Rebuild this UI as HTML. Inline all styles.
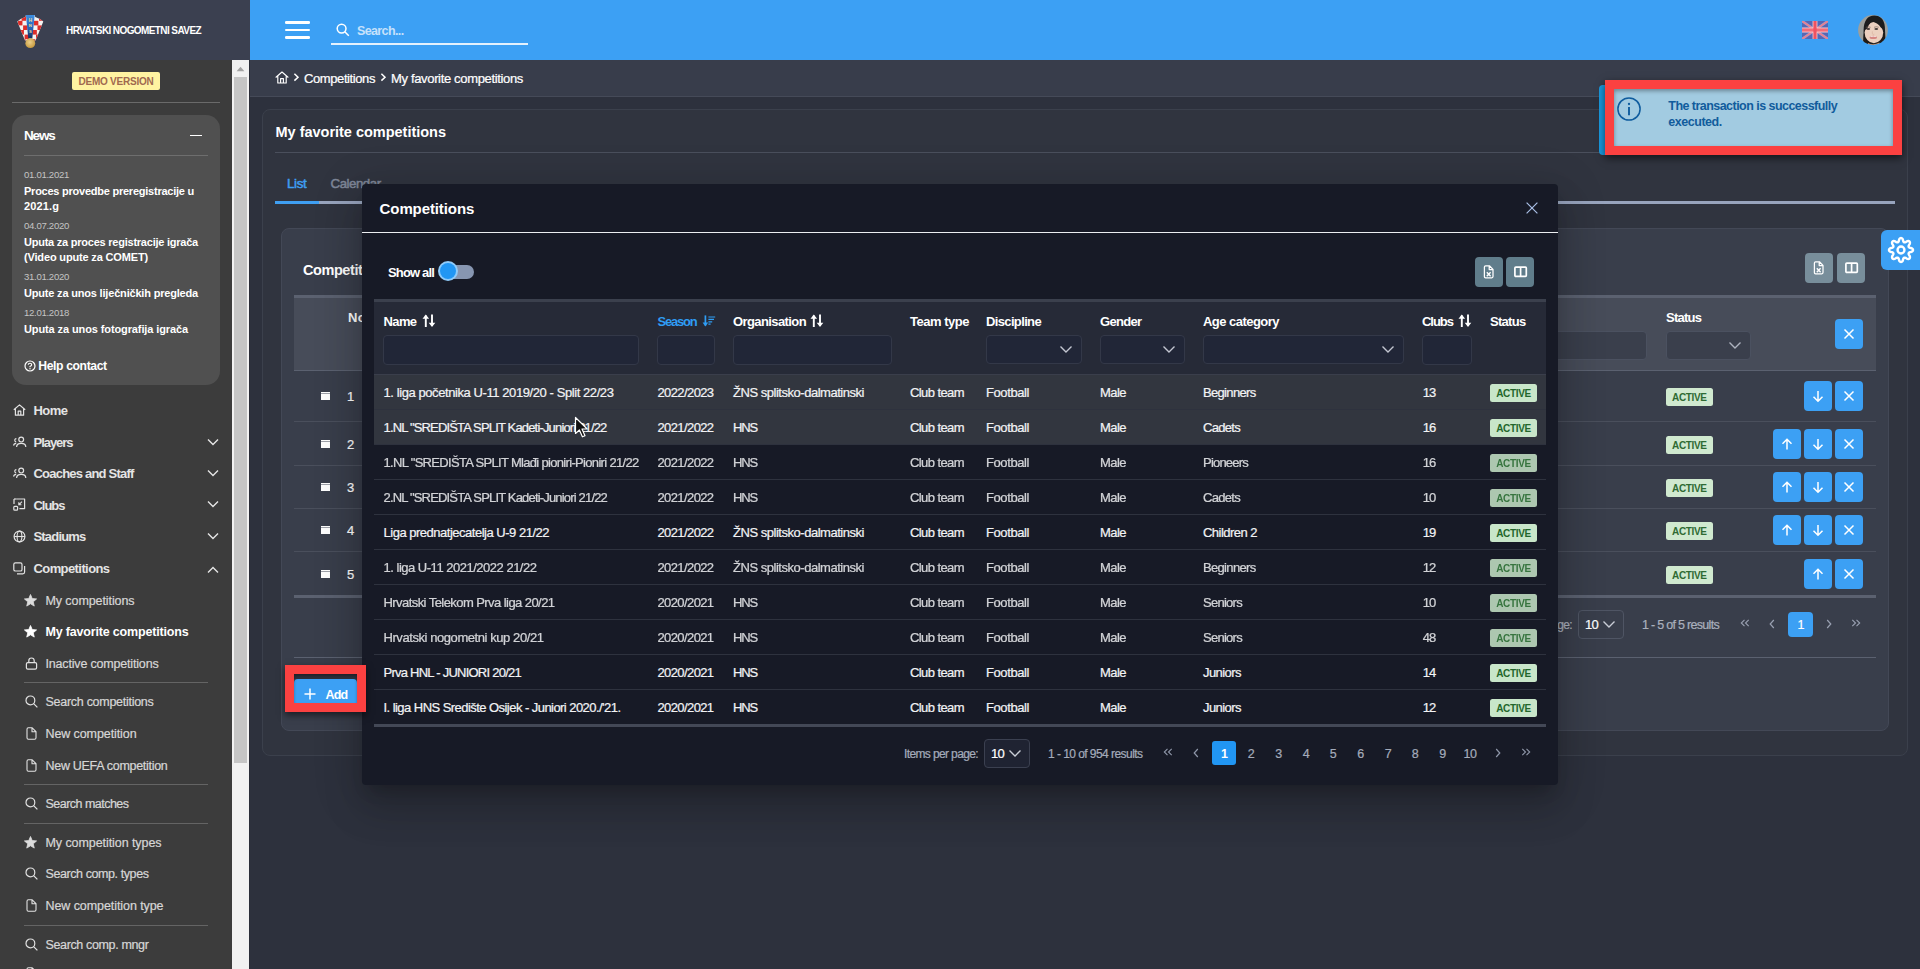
<!DOCTYPE html>
<html lang="en"><head><meta charset="utf-8"><title>My favorite competitions</title>
<style>
*{box-sizing:border-box}
html,body{margin:0;padding:0}
body{width:1920px;height:969px;overflow:hidden;position:relative;background:#2c303c;font-family:"Liberation Sans",sans-serif}
.b{position:absolute;display:block}
.t{position:absolute;white-space:pre;line-height:20px;height:20px}
</style></head>
<body>
<div class="b" style="left:250px;top:60px;width:1670px;height:909px;background:#2d313d;"></div>
<div class="b" style="left:250px;top:60px;width:1670px;height:37px;background:#383d4b;border-bottom:1px solid #454a58"></div>
<div class="b" style="left:262px;top:109px;width:1646px;height:647px;background:#30343f;border:1px solid #3b404c;border-radius:8px"></div>
<div class="b" style="left:281px;top:228px;width:1608px;height:503px;background:#393e4b;border:1px solid #434856;border-radius:8px"></div>
<svg class="b" style="left:275px;top:71px;" width="14" height="13" viewBox="0 0 14 13"><path d="M1 6.2 L7 1 L13 6.2 M2.8 5.2 V12 H11.2 V5.2 M5.6 12 V7.6 H8.4 V12" fill="none" stroke="#fff" stroke-width="1.15" stroke-linejoin="round" stroke-linecap="round"/></svg>
<svg class="b" style="left:293px;top:72px;" width="7" height="10" viewBox="0 0 7 10"><path d="M1.4 1.8 L5 5.2 L1.4 8.6" fill="none" stroke="#fff" stroke-width="1.5"/></svg>
<span class="t" style="-webkit-text-stroke:0.22px;left:304.00px;top:69.00px;font-size:13px;font-weight:400;color:#fff;letter-spacing:-0.406px;">Competitions</span>
<svg class="b" style="left:380.4px;top:72px;" width="7" height="10" viewBox="0 0 7 10"><path d="M1.4 1.8 L5 5.2 L1.4 8.6" fill="none" stroke="#fff" stroke-width="1.5"/></svg>
<span class="t" style="-webkit-text-stroke:0.22px;left:391.00px;top:69.00px;font-size:13px;font-weight:400;color:#fff;letter-spacing:-0.340px;">My favorite competitions</span>
<span class="t" style="left:275.50px;top:121.80px;font-size:14.5px;font-weight:700;color:#fff;letter-spacing:-0.013px;">My favorite competitions</span>
<div class="b" style="left:275px;top:152px;width:1620px;height:1px;background:#4a4f5c;"></div>
<span class="t" style="-webkit-text-stroke:0.22px;left:287.00px;top:174.00px;font-size:13.3px;font-weight:400;color:#3f9ff2;letter-spacing:-0.351px;-webkit-text-stroke:0.5px;">List</span>
<span class="t" style="-webkit-text-stroke:0.22px;left:330.60px;top:174.00px;font-size:13.3px;font-weight:400;color:#7e8698;letter-spacing:-0.496px;-webkit-text-stroke:0.5px;">Calendar</span>
<div class="b" style="left:275px;top:201px;width:1620px;height:3px;background:#98a4bd;"></div>
<div class="b" style="left:275px;top:201px;width:44px;height:3px;background:#3f9ff2;"></div>
<span class="t" style="left:303.00px;top:259.60px;font-size:14.5px;font-weight:700;color:#fff;letter-spacing:-0.428px;">Competitions</span>
<div class="b" style="left:1805px;top:253px;width:28px;height:30px;background:#788e9b;border-radius:4px"></div>
<svg class="b" style="left:1813.4px;top:261.4px;" width="12" height="14" viewBox="0 0 12 14"><path d="M2.6 0.8 H6.4 L10 4.4 V11.6 Q10 12.8 8.8 12.8 H2.6 Q1.4 12.8 1.4 11.6 V2 Q1.4 0.8 2.6 0.8 Z M6.2 0.8 V4.6 H10" fill="none" stroke="#fff" stroke-width="1.25" stroke-linejoin="round"/><path d="M3.8 7.2 L7.6 11.2 M7.6 7.2 L3.8 11.2" stroke="#fff" stroke-width="1.4"/></svg>
<div class="b" style="left:1837px;top:253px;width:28px;height:30px;background:#788e9b;border-radius:4px"></div>
<svg class="b" style="left:1845.4px;top:261.6px;" width="14" height="12" viewBox="0 0 14 12"><rect x="0.9" y="1.2" width="11.4" height="9.2" rx="0.9" fill="none" stroke="#fff" stroke-width="1.7"/><path d="M6.6 1.2 V10.4" stroke="#fff" stroke-width="1.7"/></svg>
<div class="b" style="left:294px;top:295px;width:1582px;height:3px;background:#5b6170;"></div>
<div class="b" style="left:294px;top:298px;width:1582px;height:72px;background:#474c59;"></div>
<div class="b" style="left:294px;top:370px;width:1582px;height:1px;background:#5b6170;"></div>
<span class="t" style="left:348.00px;top:308.00px;font-size:13px;font-weight:700;color:#fff;letter-spacing:0.328px;">No</span>
<span class="t" style="left:1666.00px;top:308.00px;font-size:13px;font-weight:700;color:#fff;letter-spacing:-0.739px;">Status</span>
<div class="b" style="left:1400px;top:331px;width:247px;height:29px;background:#3a3f4c;border:1px solid #4b5160;border-radius:4px"></div>
<div class="b" style="left:1666px;top:331px;width:85px;height:29px;background:#3a3f4c;border:1px solid #4b5160;border-radius:4px"></div>
<svg class="b" style="left:1728px;top:341px;" width="14" height="9" viewBox="0 0 14 9"><path d="M1.5 1.5 L7 7 L12.5 1.5" fill="none" stroke="#aeb3bf" stroke-width="1.4"/></svg>
<div class="b" style="left:1835px;top:319px;width:28px;height:30px;background:#3ca0f4;border-radius:4px"></div>
<svg class="b" style="left:1843px;top:328px;overflow:visible" width="12" height="12" viewBox="0 0 12 12"><path d="M1.5 1.5 L10.5 10.5 M10.5 1.5 L1.5 10.5" stroke="#fff" stroke-width="1.5" fill="none"/></svg>
<div class="b" style="left:320.6px;top:391.7px;width:9.5px;height:8.4px;background:#9da0a8;"></div>
<div class="b" style="left:320.6px;top:391.7px;width:9.5px;height:1.6px;background:#fdfdfd;"></div>
<div class="b" style="left:320.6px;top:393.95px;width:9.5px;height:1.6px;background:#fdfdfd;"></div>
<div class="b" style="left:320.6px;top:396.2px;width:9.5px;height:1.6px;background:#fdfdfd;"></div>
<div class="b" style="left:320.6px;top:398.45px;width:9.5px;height:1.6px;background:#fdfdfd;"></div>
<span class="t" style="-webkit-text-stroke:0.22px;left:347.00px;top:387.00px;font-size:13px;font-weight:400;color:#fff;letter-spacing:-0.234px;">1</span>
<div class="b" style="left:1666px;top:388px;width:47px;height:18px;background:#d0e9cf;border-radius:2.5px"></div>
<span class="t" style="left:1672.10px;top:388.00px;font-size:10px;font-weight:700;color:#2f6b33;letter-spacing:-0.345px;">ACTIVE</span>
<div class="b" style="left:1835px;top:381px;width:28px;height:30px;background:#3ca0f4;border-radius:4px"></div>
<svg class="b" style="left:1843px;top:390px;overflow:visible" width="12" height="12" viewBox="0 0 12 12"><path d="M1.5 1.5 L10.5 10.5 M10.5 1.5 L1.5 10.5" stroke="#fff" stroke-width="1.5" fill="none"/></svg>
<div class="b" style="left:1804px;top:381px;width:28px;height:30px;background:#3ca0f4;border-radius:4px"></div>
<svg class="b" style="left:1812px;top:390px;overflow:visible" width="12" height="12" viewBox="0 0 12 12"><path d="M6 1 V11 M1.5 6.8 L6 11.3 L10.5 6.8" stroke="#fff" stroke-width="1.5" fill="none"/></svg>
<div class="b" style="left:320.6px;top:439.7px;width:9.5px;height:8.4px;background:#9da0a8;"></div>
<div class="b" style="left:320.6px;top:439.7px;width:9.5px;height:1.6px;background:#fdfdfd;"></div>
<div class="b" style="left:320.6px;top:441.95px;width:9.5px;height:1.6px;background:#fdfdfd;"></div>
<div class="b" style="left:320.6px;top:444.2px;width:9.5px;height:1.6px;background:#fdfdfd;"></div>
<div class="b" style="left:320.6px;top:446.45px;width:9.5px;height:1.6px;background:#fdfdfd;"></div>
<span class="t" style="-webkit-text-stroke:0.22px;left:347.00px;top:435.00px;font-size:13px;font-weight:400;color:#fff;letter-spacing:-0.234px;">2</span>
<div class="b" style="left:1666px;top:436px;width:47px;height:18px;background:#d0e9cf;border-radius:2.5px"></div>
<span class="t" style="left:1672.10px;top:436.00px;font-size:10px;font-weight:700;color:#2f6b33;letter-spacing:-0.345px;">ACTIVE</span>
<div class="b" style="left:1835px;top:429px;width:28px;height:30px;background:#3ca0f4;border-radius:4px"></div>
<svg class="b" style="left:1843px;top:438px;overflow:visible" width="12" height="12" viewBox="0 0 12 12"><path d="M1.5 1.5 L10.5 10.5 M10.5 1.5 L1.5 10.5" stroke="#fff" stroke-width="1.5" fill="none"/></svg>
<div class="b" style="left:1804px;top:429px;width:28px;height:30px;background:#3ca0f4;border-radius:4px"></div>
<svg class="b" style="left:1812px;top:438px;overflow:visible" width="12" height="12" viewBox="0 0 12 12"><path d="M6 1 V11 M1.5 6.8 L6 11.3 L10.5 6.8" stroke="#fff" stroke-width="1.5" fill="none"/></svg>
<div class="b" style="left:1773px;top:429px;width:28px;height:30px;background:#3ca0f4;border-radius:4px"></div>
<svg class="b" style="left:1781px;top:438px;overflow:visible" width="12" height="12" viewBox="0 0 12 12"><path d="M6 11.5 V1.5 M1.5 5.7 L6 1.2 L10.5 5.7" stroke="#fff" stroke-width="1.5" fill="none"/></svg>
<div class="b" style="left:320.6px;top:482.7px;width:9.5px;height:8.4px;background:#9da0a8;"></div>
<div class="b" style="left:320.6px;top:482.7px;width:9.5px;height:1.6px;background:#fdfdfd;"></div>
<div class="b" style="left:320.6px;top:484.95px;width:9.5px;height:1.6px;background:#fdfdfd;"></div>
<div class="b" style="left:320.6px;top:487.2px;width:9.5px;height:1.6px;background:#fdfdfd;"></div>
<div class="b" style="left:320.6px;top:489.45px;width:9.5px;height:1.6px;background:#fdfdfd;"></div>
<span class="t" style="-webkit-text-stroke:0.22px;left:347.00px;top:478.00px;font-size:13px;font-weight:400;color:#fff;letter-spacing:-0.234px;">3</span>
<div class="b" style="left:1666px;top:479px;width:47px;height:18px;background:#d0e9cf;border-radius:2.5px"></div>
<span class="t" style="left:1672.10px;top:479.00px;font-size:10px;font-weight:700;color:#2f6b33;letter-spacing:-0.345px;">ACTIVE</span>
<div class="b" style="left:1835px;top:472px;width:28px;height:30px;background:#3ca0f4;border-radius:4px"></div>
<svg class="b" style="left:1843px;top:481px;overflow:visible" width="12" height="12" viewBox="0 0 12 12"><path d="M1.5 1.5 L10.5 10.5 M10.5 1.5 L1.5 10.5" stroke="#fff" stroke-width="1.5" fill="none"/></svg>
<div class="b" style="left:1804px;top:472px;width:28px;height:30px;background:#3ca0f4;border-radius:4px"></div>
<svg class="b" style="left:1812px;top:481px;overflow:visible" width="12" height="12" viewBox="0 0 12 12"><path d="M6 1 V11 M1.5 6.8 L6 11.3 L10.5 6.8" stroke="#fff" stroke-width="1.5" fill="none"/></svg>
<div class="b" style="left:1773px;top:472px;width:28px;height:30px;background:#3ca0f4;border-radius:4px"></div>
<svg class="b" style="left:1781px;top:481px;overflow:visible" width="12" height="12" viewBox="0 0 12 12"><path d="M6 11.5 V1.5 M1.5 5.7 L6 1.2 L10.5 5.7" stroke="#fff" stroke-width="1.5" fill="none"/></svg>
<div class="b" style="left:320.6px;top:525.7px;width:9.5px;height:8.4px;background:#9da0a8;"></div>
<div class="b" style="left:320.6px;top:525.7px;width:9.5px;height:1.6px;background:#fdfdfd;"></div>
<div class="b" style="left:320.6px;top:527.95px;width:9.5px;height:1.6px;background:#fdfdfd;"></div>
<div class="b" style="left:320.6px;top:530.2px;width:9.5px;height:1.6px;background:#fdfdfd;"></div>
<div class="b" style="left:320.6px;top:532.45px;width:9.5px;height:1.6px;background:#fdfdfd;"></div>
<span class="t" style="-webkit-text-stroke:0.22px;left:347.00px;top:521.00px;font-size:13px;font-weight:400;color:#fff;letter-spacing:-0.234px;">4</span>
<div class="b" style="left:1666px;top:522px;width:47px;height:18px;background:#d0e9cf;border-radius:2.5px"></div>
<span class="t" style="left:1672.10px;top:522.00px;font-size:10px;font-weight:700;color:#2f6b33;letter-spacing:-0.345px;">ACTIVE</span>
<div class="b" style="left:1835px;top:515px;width:28px;height:30px;background:#3ca0f4;border-radius:4px"></div>
<svg class="b" style="left:1843px;top:524px;overflow:visible" width="12" height="12" viewBox="0 0 12 12"><path d="M1.5 1.5 L10.5 10.5 M10.5 1.5 L1.5 10.5" stroke="#fff" stroke-width="1.5" fill="none"/></svg>
<div class="b" style="left:1804px;top:515px;width:28px;height:30px;background:#3ca0f4;border-radius:4px"></div>
<svg class="b" style="left:1812px;top:524px;overflow:visible" width="12" height="12" viewBox="0 0 12 12"><path d="M6 1 V11 M1.5 6.8 L6 11.3 L10.5 6.8" stroke="#fff" stroke-width="1.5" fill="none"/></svg>
<div class="b" style="left:1773px;top:515px;width:28px;height:30px;background:#3ca0f4;border-radius:4px"></div>
<svg class="b" style="left:1781px;top:524px;overflow:visible" width="12" height="12" viewBox="0 0 12 12"><path d="M6 11.5 V1.5 M1.5 5.7 L6 1.2 L10.5 5.7" stroke="#fff" stroke-width="1.5" fill="none"/></svg>
<div class="b" style="left:320.6px;top:569.7px;width:9.5px;height:8.4px;background:#9da0a8;"></div>
<div class="b" style="left:320.6px;top:569.7px;width:9.5px;height:1.6px;background:#fdfdfd;"></div>
<div class="b" style="left:320.6px;top:571.95px;width:9.5px;height:1.6px;background:#fdfdfd;"></div>
<div class="b" style="left:320.6px;top:574.2px;width:9.5px;height:1.6px;background:#fdfdfd;"></div>
<div class="b" style="left:320.6px;top:576.45px;width:9.5px;height:1.6px;background:#fdfdfd;"></div>
<span class="t" style="-webkit-text-stroke:0.22px;left:347.00px;top:565.00px;font-size:13px;font-weight:400;color:#fff;letter-spacing:-0.234px;">5</span>
<div class="b" style="left:1666px;top:566px;width:47px;height:18px;background:#d0e9cf;border-radius:2.5px"></div>
<span class="t" style="left:1672.10px;top:566.00px;font-size:10px;font-weight:700;color:#2f6b33;letter-spacing:-0.345px;">ACTIVE</span>
<div class="b" style="left:1835px;top:559px;width:28px;height:30px;background:#3ca0f4;border-radius:4px"></div>
<svg class="b" style="left:1843px;top:568px;overflow:visible" width="12" height="12" viewBox="0 0 12 12"><path d="M1.5 1.5 L10.5 10.5 M10.5 1.5 L1.5 10.5" stroke="#fff" stroke-width="1.5" fill="none"/></svg>
<div class="b" style="left:1804px;top:559px;width:28px;height:30px;background:#3ca0f4;border-radius:4px"></div>
<svg class="b" style="left:1812px;top:568px;overflow:visible" width="12" height="12" viewBox="0 0 12 12"><path d="M6 11.5 V1.5 M1.5 5.7 L6 1.2 L10.5 5.7" stroke="#fff" stroke-width="1.5" fill="none"/></svg>
<div class="b" style="left:294px;top:421px;width:1582px;height:1px;background:#4a4f5c;"></div>
<div class="b" style="left:294px;top:465px;width:1582px;height:1px;background:#4a4f5c;"></div>
<div class="b" style="left:294px;top:508px;width:1582px;height:1px;background:#4a4f5c;"></div>
<div class="b" style="left:294px;top:551px;width:1582px;height:1px;background:#4a4f5c;"></div>
<div class="b" style="left:294px;top:595px;width:1582px;height:3px;background:#5b6170;"></div>
<div class="b" style="left:294px;top:657px;width:1582px;height:1px;background:#5b6170;"></div>
<span class="t" style="-webkit-text-stroke:0.22px;left:1498.00px;top:615.00px;font-size:12px;font-weight:400;color:#aab0bd;letter-spacing:-0.626px;">Items per page:</span>
<div class="b" style="left:1578px;top:610px;width:46px;height:29px;background:#393e4b;border:1px solid #4f5564;border-radius:4px"></div>
<span class="t" style="-webkit-text-stroke:0.22px;left:1585.00px;top:615.00px;font-size:13px;font-weight:400;color:#fff;letter-spacing:-0.734px;">10</span>
<svg class="b" style="left:1602px;top:620px;" width="14" height="9" viewBox="0 0 14 9"><path d="M1.5 1.5 L7 7 L12.5 1.5" fill="none" stroke="#c9cdd6" stroke-width="1.4"/></svg>
<span class="t" style="-webkit-text-stroke:0.22px;left:1642.00px;top:615.00px;font-size:12.5px;font-weight:400;color:#aab0bd;letter-spacing:-0.701px;">1 - 5 of 5 results</span>
<svg class="b" style="left:1740px;top:619px;" width="10" height="8" viewBox="0 0 10 8"><path d="M4.5 0.8 L1.3 4 L4.5 7.2 M8.7 0.8 L5.5 4 L8.7 7.2" fill="none" stroke="#9aa1b2" stroke-width="1.1"/></svg>
<svg class="b" style="left:1769px;top:619px;" width="6" height="10" viewBox="0 0 6 10"><path d="M4.8 1 L1.2 5 L4.8 9" fill="none" stroke="#9aa1b2" stroke-width="1.2"/></svg>
<div class="b" style="left:1788px;top:612px;width:25px;height:25px;background:#3ca0f4;border-radius:4px"></div>
<span class="t" style="-webkit-text-stroke:0.22px;left:1797.50px;top:615.00px;font-size:12.5px;font-weight:400;color:#fff;letter-spacing:-0.953px;">1</span>
<svg class="b" style="left:1826px;top:619px;" width="6" height="10" viewBox="0 0 6 10"><path d="M1.2 1 L4.8 5 L1.2 9" fill="none" stroke="#9aa1b2" stroke-width="1.2"/></svg>
<svg class="b" style="left:1851px;top:619px;" width="10" height="8" viewBox="0 0 10 8"><path d="M1.3 0.8 L4.5 4 L1.3 7.2 M5.5 0.8 L8.7 4 L5.5 7.2" fill="none" stroke="#9aa1b2" stroke-width="1.1"/></svg>
<div class="b" style="left:1881px;top:230px;width:39px;height:40px;background:#3ca0f4;border-radius:6px 0 0 6px"></div>
<svg class="b" style="left:1886px;top:234.6px;" width="30" height="30" viewBox="0 0 30 30"><path d="M15.00 3.00 L15.47 3.07 L15.92 3.29 L16.34 3.65 L16.72 4.17 L16.98 5.05 L17.18 5.92 L17.41 6.46 L17.64 6.86 L17.89 7.15 L18.18 7.33 L18.50 7.40 L18.88 7.38 L19.34 7.26 L19.88 7.04 L20.64 6.56 L21.44 6.13 L22.07 6.03 L22.63 6.07 L23.10 6.24 L23.49 6.51 L23.76 6.90 L23.93 7.37 L23.97 7.93 L23.87 8.56 L23.44 9.36 L22.96 10.12 L22.74 10.66 L22.62 11.12 L22.60 11.50 L22.67 11.82 L22.85 12.11 L23.14 12.36 L23.54 12.59 L24.08 12.82 L24.95 13.02 L25.83 13.28 L26.35 13.66 L26.71 14.08 L26.93 14.53 L27.00 15.00 L26.93 15.47 L26.71 15.92 L26.35 16.34 L25.83 16.72 L24.95 16.98 L24.08 17.18 L23.54 17.41 L23.14 17.64 L22.85 17.89 L22.67 18.18 L22.60 18.50 L22.62 18.88 L22.74 19.34 L22.96 19.88 L23.44 20.64 L23.87 21.44 L23.97 22.07 L23.93 22.63 L23.76 23.10 L23.49 23.49 L23.10 23.76 L22.63 23.93 L22.07 23.97 L21.44 23.87 L20.64 23.44 L19.88 22.96 L19.34 22.74 L18.88 22.62 L18.50 22.60 L18.18 22.67 L17.89 22.85 L17.64 23.14 L17.41 23.54 L17.18 24.08 L16.98 24.95 L16.72 25.83 L16.34 26.35 L15.92 26.71 L15.47 26.93 L15.00 27.00 L14.53 26.93 L14.08 26.71 L13.66 26.35 L13.28 25.83 L13.02 24.95 L12.82 24.08 L12.59 23.54 L12.36 23.14 L12.11 22.85 L11.82 22.67 L11.50 22.60 L11.12 22.62 L10.66 22.74 L10.12 22.96 L9.36 23.44 L8.56 23.87 L7.93 23.97 L7.37 23.93 L6.90 23.76 L6.51 23.49 L6.24 23.10 L6.07 22.63 L6.03 22.07 L6.13 21.44 L6.56 20.64 L7.04 19.88 L7.26 19.34 L7.38 18.88 L7.40 18.50 L7.33 18.18 L7.15 17.89 L6.86 17.64 L6.46 17.41 L5.92 17.18 L5.05 16.98 L4.17 16.72 L3.65 16.34 L3.29 15.92 L3.07 15.47 L3.00 15.00 L3.07 14.53 L3.29 14.08 L3.65 13.66 L4.17 13.28 L5.05 13.02 L5.92 12.82 L6.46 12.59 L6.86 12.36 L7.15 12.11 L7.33 11.82 L7.40 11.50 L7.38 11.12 L7.26 10.66 L7.04 10.12 L6.56 9.36 L6.13 8.56 L6.03 7.93 L6.07 7.37 L6.24 6.90 L6.51 6.51 L6.90 6.24 L7.37 6.07 L7.93 6.03 L8.56 6.13 L9.36 6.56 L10.12 7.04 L10.66 7.26 L11.12 7.38 L11.50 7.40 L11.82 7.33 L12.11 7.15 L12.36 6.86 L12.59 6.46 L12.82 5.92 L13.02 5.05 L13.28 4.17 L13.66 3.65 L14.08 3.29 L14.53 3.07 Z" fill="none" stroke="#fff" stroke-width="2.4" stroke-linejoin="round"/><circle cx="15" cy="15" r="3.45" fill="none" stroke="#fff" stroke-width="2.4"/></svg>
<div class="b" style="left:0px;top:0px;width:250px;height:60px;background:#3b4050;"></div>
<div class="b" style="left:250px;top:0px;width:1670px;height:60px;background:#3ca0f4;"></div>
<svg class="b" style="left:16.7px;top:14.8px;" width="27" height="34" viewBox="0 0 27 34"><defs><clipPath id="shc"><path d="M0.3 6.4 L3.6 4 L8.4 1.9 L8.9 0 L17.7 0 L18.2 1.9 L23 4 L26.3 6.4 L18.6 25.6 L8 25.6 Z"/></clipPath><linearGradient id="bandg" x1="0" y1="0" x2="0" y2="1"><stop offset="0" stop-color="#3d8fe0"/><stop offset="0.6" stop-color="#2560b4"/><stop offset="1" stop-color="#152a55"/></linearGradient><radialGradient id="ballg" cx="0.45" cy="0.4" r="0.6"><stop offset="0" stop-color="#ecd08a"/><stop offset="1" stop-color="#c79a3f"/></radialGradient><filter id="crb" x="-10%" y="-10%" width="120%" height="120%"><feGaussianBlur stdDeviation="0.35"/></filter></defs><g filter="url(#crb)"><g clip-path="url(#shc)"><rect x="0" y="0" width="27" height="27" fill="#f6f3f1"/><rect x="4.60" y="1.20" width="4.4" height="4.6" fill="#dc2f2c"/><rect x="22.00" y="1.20" width="4.4" height="4.6" fill="#dc2f2c"/><rect x="1.05" y="5.80" width="4.4" height="4.6" fill="#dc2f2c"/><rect x="16.95" y="5.80" width="4.4" height="4.6" fill="#dc2f2c"/><rect x="6.10" y="10.40" width="4.4" height="4.6" fill="#dc2f2c"/><rect x="20.50" y="10.40" width="4.4" height="4.6" fill="#dc2f2c"/><rect x="2.55" y="15.00" width="4.4" height="4.6" fill="#dc2f2c"/><rect x="15.45" y="15.00" width="4.4" height="4.6" fill="#dc2f2c"/><rect x="7.60" y="19.60" width="4.4" height="4.6" fill="#dc2f2c"/><rect x="19.00" y="19.60" width="4.4" height="4.6" fill="#dc2f2c"/><rect x="4.05" y="24.20" width="4.4" height="4.6" fill="#dc2f2c"/><rect x="13.95" y="24.20" width="4.4" height="4.6" fill="#dc2f2c"/></g><path d="M8.9 0 H17.7 L15.3 23.6 H11.3 Z" fill="url(#bandg)"/><circle cx="13.3" cy="28.2" r="4.9" fill="url(#ballg)"/></g><text x="13.3" y="6.6" font-family="Liberation Sans, sans-serif" font-size="4.6" font-weight="700" fill="#f1df8f" text-anchor="middle">H</text><text x="13.3" y="12.2" font-family="Liberation Sans, sans-serif" font-size="4.4" font-weight="700" fill="#f1df8f" text-anchor="middle">N</text><text x="13.3" y="17.6" font-family="Liberation Sans, sans-serif" font-size="4.2" font-weight="700" fill="#f1df8f" text-anchor="middle">S</text></svg>
<span class="t" style="left:66.00px;top:20.50px;font-size:10px;font-weight:700;color:#fff;letter-spacing:-0.595px;">HRVATSKI NOGOMETNI SAVEZ</span>
<div class="b" style="left:284.5px;top:21.3px;width:25px;height:2.6px;background:#fff;border-radius:1.3px"></div>
<div class="b" style="left:284.5px;top:28.8px;width:25px;height:2.6px;background:#fff;border-radius:1.3px"></div>
<div class="b" style="left:284.5px;top:36.3px;width:25px;height:2.6px;background:#fff;border-radius:1.3px"></div>
<svg class="b" style="left:336px;top:23px;" width="14" height="14" viewBox="0 0 14 14"><circle cx="5.6" cy="5.6" r="4.4" fill="none" stroke="#fff" stroke-width="1.5"/><path d="M8.8 8.8 L12.8 12.8" stroke="#fff" stroke-width="1.5"/></svg>
<span class="t" style="left:357.00px;top:20.50px;font-size:12.5px;font-weight:700;color:#c6e1fb;letter-spacing:-0.625px;">Search...</span>
<div class="b" style="left:331px;top:43.2px;width:197px;height:1.5px;background:#e3f1fd;"></div>
<svg class="b" style="left:1802px;top:21px;" width="26" height="18" viewBox="0 0 26 18"><rect width="26" height="18" fill="#5567b4"/><path d="M0 0 L26 18 M26 0 L0 18" stroke="#9c9ccf" stroke-width="2.6"/><path d="M0 0 L26 18 M26 0 L0 18" stroke="#ea7f8e" stroke-width="1.5"/><path d="M13 0 V18 M0 9 H26" stroke="#f5ccd3" stroke-width="4.8"/><path d="M0 9 H26" stroke="#f26c78" stroke-width="3.2"/><path d="M13 0 V18" stroke="#ee5261" stroke-width="3.2"/></svg>
<svg class="b" style="left:1858px;top:15px;" width="30" height="30" viewBox="0 0 30 30"><defs><clipPath id="avc"><circle cx="15" cy="15" r="14.9"/></clipPath><filter id="avb" x="-10%" y="-10%" width="120%" height="120%"><feGaussianBlur stdDeviation="0.55"/></filter></defs><g clip-path="url(#avc)"><g filter="url(#avb)"><rect x="-2" y="-2" width="34" height="34" fill="#9c9f9c"/><path d="M5.2 31 L5.6 15 Q6 0.4 16.5 0.4 Q27 0.6 27 15 L27.6 28 L22 31 Z" fill="#1d1d1d"/><ellipse cx="15.9" cy="17.6" rx="9.3" ry="10.6" fill="#ecd0bf"/><path d="M6.2 16 Q6.4 7 12.4 6.2 L14.4 6.6 Q10.2 9.6 9.4 13.4 Q7.6 14 6.2 16 Z" fill="#1d1d1d"/><path d="M14.4 6.6 L17 5.4 Q25.4 6 26 17.2 Q24.6 13.4 22.6 12.2 Q20 8.2 14.4 6.6 Z" fill="#1d1d1d"/><path d="M5.2 31 L5.8 19 Q7.2 23.6 9.6 26.6 L9 31 Z" fill="#241a16"/><path d="M27.4 28 L26.6 17 Q25.4 22.6 22.4 26.4 L21.6 31 Z" fill="#241a16"/><ellipse cx="10.3" cy="14" rx="1.9" ry="1" fill="#4a3f3b"/><ellipse cx="18.3" cy="14" rx="1.9" ry="1" fill="#4a3f3b"/><path d="M7.8 12.3 Q10.2 11.2 12.6 12.3 M16 12.3 Q18.4 11.2 20.8 12.3" stroke="#6b5a52" stroke-width="0.6" fill="none"/><ellipse cx="15.3" cy="22.4" rx="3.7" ry="1.7" fill="#d68783"/><path d="M12.2 21.5 Q15.3 22.6 18.4 21.5 L18 21.1 Q15.3 21.7 12.6 21.1 Z" fill="#fbf3ef"/><path d="M14.4 16.4 Q14 18.6 14.6 19.2 Q15.4 19.6 16.4 19.2" stroke="#d9b29f" stroke-width="0.7" fill="none"/><path d="M10 28 Q15.5 30.6 21.4 27.6 L22 32 H9.6 Z" fill="#c98f6a"/></g></g></svg>
<div class="b" style="left:0px;top:60px;width:232px;height:909px;background:#3c3c3c;"></div>
<div class="b" style="left:232px;top:60px;width:17px;height:909px;background:#f1f1f1;"></div>
<div class="b" style="left:249px;top:60px;width:1px;height:909px;background:#2a2d38;"></div>
<div class="b" style="left:234px;top:77px;width:13px;height:686px;background:#c5c5c5;"></div>
<svg class="b" style="left:236px;top:66px;" width="9" height="6" viewBox="0 0 9 6"><path d="M4.5 0.8 L8.4 5.2 H0.6 Z" fill="#a3a3a3"/></svg>
<div class="b" style="left:72px;top:72px;width:88px;height:18px;background:#fff3a1;border-radius:2px"></div>
<span class="t" style="left:78.50px;top:71.60px;font-size:10px;font-weight:700;color:#a0694f;letter-spacing:-0.233px;">DEMO VERSION</span>
<div class="b" style="left:12px;top:102px;width:208px;height:1px;background:#6a6a6a;"></div>
<div class="b" style="left:12px;top:115px;width:208px;height:270px;background:#505050;border-radius:14px"></div>
<span class="t" style="left:24.00px;top:125.60px;font-size:13.5px;font-weight:700;color:#fff;letter-spacing:-1.170px;">News</span>
<div class="b" style="left:190px;top:134.5px;width:12px;height:1.6px;background:#fff;"></div>
<div class="b" style="left:24px;top:155px;width:184px;height:1px;background:#6e6e6e;"></div>
<span class="t" style="left:24.00px;top:164.50px;font-size:9.6px;font-weight:400;color:#c4c4c4;letter-spacing:-0.302px;">01.01.2021</span>
<span class="t" style="left:24.00px;top:181.00px;font-size:11px;font-weight:700;color:#fff;letter-spacing:-0.240px;">Proces provedbe preregistracije u</span>
<span class="t" style="left:24.00px;top:196.00px;font-size:11px;font-weight:700;color:#fff;letter-spacing:0.125px;">2021.g</span>
<span class="t" style="left:24.00px;top:215.50px;font-size:9.6px;font-weight:400;color:#c4c4c4;letter-spacing:-0.302px;">04.07.2020</span>
<span class="t" style="left:24.00px;top:232.00px;font-size:11px;font-weight:700;color:#fff;letter-spacing:-0.234px;">Uputa za proces registracije igrača</span>
<span class="t" style="left:24.00px;top:247.00px;font-size:11px;font-weight:700;color:#fff;letter-spacing:-0.161px;">(Video upute za COMET)</span>
<span class="t" style="left:24.00px;top:266.50px;font-size:9.6px;font-weight:400;color:#c4c4c4;letter-spacing:-0.302px;">31.01.2020</span>
<span class="t" style="left:24.00px;top:283.00px;font-size:11px;font-weight:700;color:#fff;letter-spacing:-0.186px;">Upute za unos liječničkih pregleda</span>
<span class="t" style="left:24.00px;top:302.50px;font-size:9.6px;font-weight:400;color:#c4c4c4;letter-spacing:-0.302px;">12.01.2018</span>
<span class="t" style="left:24.00px;top:319.00px;font-size:11px;font-weight:700;color:#fff;letter-spacing:-0.108px;">Uputa za unos fotografija igrača</span>
<svg class="b" style="left:24px;top:360px;" width="12" height="12" viewBox="0 0 12 12"><circle cx="6" cy="6" r="5" fill="none" stroke="#fff" stroke-width="1.2"/><path d="M4.3 4.8 Q4.3 3.2 6 3.2 Q7.7 3.2 7.7 4.7 Q7.7 5.6 6 6.4 V7.2" fill="none" stroke="#fff" stroke-width="1.1"/><circle cx="6" cy="8.8" r="0.7" fill="#fff"/></svg>
<span class="t" style="left:38.30px;top:356.00px;font-size:12.2px;font-weight:700;color:#fff;letter-spacing:-0.387px;">Help contact</span>
<svg class="b" style="left:12.5px;top:403.5px;" width="13" height="12" viewBox="0 0 13 12"><path d="M0.8 5.8 L6.5 0.9 L12.2 5.8 M2.4 4.8 V11.2 H10.6 V4.8 M5.2 11.2 V7.2 H7.8 V11.2" fill="none" stroke="#e2e2e2" stroke-width="1.2" stroke-linejoin="round"/></svg>
<span class="t" style="left:33.50px;top:401.00px;font-size:13px;font-weight:700;color:#e4e4e4;letter-spacing:-0.531px;">Home</span>
<svg class="b" style="left:12.5px;top:435.5px;" width="14" height="12" viewBox="0 0 14 12"><circle cx="8.2" cy="3.6" r="2.4" fill="none" stroke="#e2e2e2" stroke-width="1.2"/><path d="M3.6 11 Q3.6 7.4 8.2 7.4 Q12.8 7.4 12.8 11" fill="none" stroke="#e2e2e2" stroke-width="1.2"/><path d="M3.4 2.6 Q1.6 2.8 1.8 4.6 Q2 5.8 3.2 5.9 M0.6 9.6 Q0.8 7.4 3.2 7.4" fill="none" stroke="#e2e2e2" stroke-width="1.1"/></svg>
<span class="t" style="left:33.50px;top:433.00px;font-size:13px;font-weight:700;color:#e4e4e4;letter-spacing:-1.038px;">Players</span>
<svg class="b" style="left:207px;top:437.5px;" width="12" height="8" viewBox="0 0 12 8"><path d="M1 1.5 L6 6.5 L11 1.5" fill="none" stroke="#e6e6e6" stroke-width="1.4"/></svg>
<svg class="b" style="left:12.5px;top:466.5px;" width="14" height="12" viewBox="0 0 14 12"><circle cx="8.2" cy="3.6" r="2.4" fill="none" stroke="#e2e2e2" stroke-width="1.2"/><path d="M3.6 11 Q3.6 7.4 8.2 7.4 Q12.8 7.4 12.8 11" fill="none" stroke="#e2e2e2" stroke-width="1.2"/><path d="M3.4 2.6 Q1.6 2.8 1.8 4.6 Q2 5.8 3.2 5.9 M0.6 9.6 Q0.8 7.4 3.2 7.4" fill="none" stroke="#e2e2e2" stroke-width="1.1"/></svg>
<span class="t" style="left:33.50px;top:464.00px;font-size:13px;font-weight:700;color:#e4e4e4;letter-spacing:-0.790px;">Coaches and Staff</span>
<svg class="b" style="left:207px;top:468.5px;" width="12" height="8" viewBox="0 0 12 8"><path d="M1 1.5 L6 6.5 L11 1.5" fill="none" stroke="#e6e6e6" stroke-width="1.4"/></svg>
<svg class="b" style="left:12.5px;top:498.0px;" width="13" height="13" viewBox="0 0 13 13"><path d="M3.4 1 H11.6 V10.6 H6.4" fill="none" stroke="#e2e2e2" stroke-width="1.2" stroke-linejoin="round"/><path d="M1 1 H3.4" stroke="#e2e2e2" stroke-width="1.2"/><path d="M1 1 V6" stroke="#e2e2e2" stroke-width="1.2"/><rect x="0.8" y="8.4" width="3.8" height="3.8" rx="0.9" fill="none" stroke="#e2e2e2" stroke-width="1.2"/><path d="M9 3.6 L5.8 6.8 M5.8 4.2 V6.8 H8.4" fill="none" stroke="#e2e2e2" stroke-width="1.1"/></svg>
<span class="t" style="left:33.50px;top:495.50px;font-size:13px;font-weight:700;color:#e4e4e4;letter-spacing:-1.025px;">Clubs</span>
<svg class="b" style="left:207px;top:500.0px;" width="12" height="8" viewBox="0 0 12 8"><path d="M1 1.5 L6 6.5 L11 1.5" fill="none" stroke="#e6e6e6" stroke-width="1.4"/></svg>
<svg class="b" style="left:12.5px;top:529.5px;" width="13" height="13" viewBox="0 0 13 13"><circle cx="6.5" cy="6.5" r="5.4" fill="none" stroke="#e2e2e2" stroke-width="1.2"/><ellipse cx="6.5" cy="6.5" rx="2.4" ry="5.4" fill="none" stroke="#e2e2e2" stroke-width="1.1"/><path d="M1.2 6.5 H11.8" stroke="#e2e2e2" stroke-width="1.1"/></svg>
<span class="t" style="left:33.50px;top:527.00px;font-size:13px;font-weight:700;color:#e4e4e4;letter-spacing:-0.814px;">Stadiums</span>
<svg class="b" style="left:207px;top:531.5px;" width="12" height="8" viewBox="0 0 12 8"><path d="M1 1.5 L6 6.5 L11 1.5" fill="none" stroke="#e6e6e6" stroke-width="1.4"/></svg>
<svg class="b" style="left:12.5px;top:561.5px;" width="13" height="13" viewBox="0 0 13 13"><rect x="0.8" y="0.8" width="8.2" height="8.2" rx="1.6" fill="none" stroke="#e2e2e2" stroke-width="1.2"/><path d="M11.6 4 V10 Q11.6 11.8 9.8 11.8 H4" fill="none" stroke="#e2e2e2" stroke-width="1.2"/></svg>
<span class="t" style="left:33.50px;top:559.00px;font-size:13px;font-weight:700;color:#e4e4e4;letter-spacing:-0.589px;">Competitions</span>
<svg class="b" style="left:207px;top:566px;" width="12" height="8" viewBox="0 0 12 8"><path d="M1 6.5 L6 1.5 L11 6.5" fill="none" stroke="#e6e6e6" stroke-width="1.4"/></svg>
<div class="b" style="left:24px;top:682.0px;width:184px;height:1px;background:#646464;"></div>
<div class="b" style="left:24px;top:784.0px;width:184px;height:1px;background:#646464;"></div>
<div class="b" style="left:24px;top:822.5px;width:184px;height:1px;background:#646464;"></div>
<div class="b" style="left:24px;top:925.0px;width:184px;height:1px;background:#646464;"></div>
<svg class="b" style="left:24px;top:593.5px;" width="13" height="13" viewBox="0 0 13 13"><polygon points="6.50,0.50 8.20,4.55 12.59,4.92 9.26,7.80 10.26,12.08 6.50,9.80 2.74,12.08 3.74,7.80 0.41,4.92 4.80,4.55" fill="#dcdcdc" stroke="#dcdcdc" stroke-width="0.8" stroke-linejoin="round"/></svg>
<span class="t" style="-webkit-text-stroke:0.22px;left:45.50px;top:591.00px;font-size:12.5px;font-weight:400;color:#d6d6d6;letter-spacing:-0.087px;">My competitions</span>
<svg class="b" style="left:24px;top:624.5px;" width="13" height="13" viewBox="0 0 13 13"><polygon points="6.50,0.50 8.20,4.55 12.59,4.92 9.26,7.80 10.26,12.08 6.50,9.80 2.74,12.08 3.74,7.80 0.41,4.92 4.80,4.55" fill="#fff" stroke="#fff" stroke-width="0.8" stroke-linejoin="round"/></svg>
<span class="t" style="left:45.50px;top:622.00px;font-size:12.5px;font-weight:700;color:#fff;letter-spacing:-0.177px;">My favorite competitions</span>
<svg class="b" style="left:24.5px;top:657px;" width="13" height="13" viewBox="0 0 13 13"><rect x="1.4" y="5.6" width="10.2" height="6.6" rx="1.4" fill="none" stroke="#e2e2e2" stroke-width="1.2"/><path d="M3.8 5.6 V3.8 Q3.8 1 6.5 1 Q9.2 1 9.2 3.8 V5.6" fill="none" stroke="#e2e2e2" stroke-width="1.2"/></svg>
<span class="t" style="-webkit-text-stroke:0.22px;left:45.50px;top:654.00px;font-size:12.5px;font-weight:400;color:#d6d6d6;letter-spacing:-0.178px;">Inactive competitions</span>
<svg class="b" style="left:24.5px;top:695px;" width="13" height="13" viewBox="0 0 13 13"><circle cx="5.4" cy="5.4" r="4.4" fill="none" stroke="#e2e2e2" stroke-width="1.2"/><path d="M8.6 8.6 L12.4 12.4" stroke="#e2e2e2" stroke-width="1.2"/></svg>
<span class="t" style="-webkit-text-stroke:0.22px;left:45.50px;top:692.00px;font-size:12.5px;font-weight:400;color:#d6d6d6;letter-spacing:-0.277px;">Search competitions</span>
<svg class="b" style="left:25.5px;top:727px;" width="11" height="13" viewBox="0 0 11 13"><path d="M1 2.2 Q1 0.8 2.4 0.8 H6.2 L10 4.6 V10.8 Q10 12.2 8.6 12.2 H2.4 Q1 12.2 1 10.8 Z M6 0.8 V4.8 H10" fill="none" stroke="#e2e2e2" stroke-width="1.1" stroke-linejoin="round"/></svg>
<span class="t" style="-webkit-text-stroke:0.22px;left:45.50px;top:724.00px;font-size:12.5px;font-weight:400;color:#d6d6d6;letter-spacing:-0.094px;">New competition</span>
<svg class="b" style="left:25.5px;top:759px;" width="11" height="13" viewBox="0 0 11 13"><path d="M1 2.2 Q1 0.8 2.4 0.8 H6.2 L10 4.6 V10.8 Q10 12.2 8.6 12.2 H2.4 Q1 12.2 1 10.8 Z M6 0.8 V4.8 H10" fill="none" stroke="#e2e2e2" stroke-width="1.1" stroke-linejoin="round"/></svg>
<span class="t" style="-webkit-text-stroke:0.22px;left:45.50px;top:756.00px;font-size:12.5px;font-weight:400;color:#d6d6d6;letter-spacing:-0.292px;">New UEFA competition</span>
<svg class="b" style="left:24.5px;top:797px;" width="13" height="13" viewBox="0 0 13 13"><circle cx="5.4" cy="5.4" r="4.4" fill="none" stroke="#e2e2e2" stroke-width="1.2"/><path d="M8.6 8.6 L12.4 12.4" stroke="#e2e2e2" stroke-width="1.2"/></svg>
<span class="t" style="-webkit-text-stroke:0.22px;left:45.50px;top:794.00px;font-size:12.5px;font-weight:400;color:#d6d6d6;letter-spacing:-0.523px;">Search matches</span>
<svg class="b" style="left:24px;top:835.5px;" width="13" height="13" viewBox="0 0 13 13"><polygon points="6.50,0.50 8.20,4.55 12.59,4.92 9.26,7.80 10.26,12.08 6.50,9.80 2.74,12.08 3.74,7.80 0.41,4.92 4.80,4.55" fill="#dcdcdc" stroke="#dcdcdc" stroke-width="0.8" stroke-linejoin="round"/></svg>
<span class="t" style="-webkit-text-stroke:0.22px;left:45.50px;top:833.00px;font-size:12.5px;font-weight:400;color:#d6d6d6;letter-spacing:-0.071px;">My competition types</span>
<svg class="b" style="left:24.5px;top:867px;" width="13" height="13" viewBox="0 0 13 13"><circle cx="5.4" cy="5.4" r="4.4" fill="none" stroke="#e2e2e2" stroke-width="1.2"/><path d="M8.6 8.6 L12.4 12.4" stroke="#e2e2e2" stroke-width="1.2"/></svg>
<span class="t" style="-webkit-text-stroke:0.22px;left:45.50px;top:864.00px;font-size:12.5px;font-weight:400;color:#d6d6d6;letter-spacing:-0.415px;">Search comp. types</span>
<svg class="b" style="left:25.5px;top:899px;" width="11" height="13" viewBox="0 0 11 13"><path d="M1 2.2 Q1 0.8 2.4 0.8 H6.2 L10 4.6 V10.8 Q10 12.2 8.6 12.2 H2.4 Q1 12.2 1 10.8 Z M6 0.8 V4.8 H10" fill="none" stroke="#e2e2e2" stroke-width="1.1" stroke-linejoin="round"/></svg>
<span class="t" style="-webkit-text-stroke:0.22px;left:45.50px;top:896.00px;font-size:12.5px;font-weight:400;color:#d6d6d6;letter-spacing:-0.076px;">New competition type</span>
<svg class="b" style="left:24.5px;top:938px;" width="13" height="13" viewBox="0 0 13 13"><circle cx="5.4" cy="5.4" r="4.4" fill="none" stroke="#e2e2e2" stroke-width="1.2"/><path d="M8.6 8.6 L12.4 12.4" stroke="#e2e2e2" stroke-width="1.2"/></svg>
<span class="t" style="-webkit-text-stroke:0.22px;left:45.50px;top:935.00px;font-size:12.5px;font-weight:400;color:#d6d6d6;letter-spacing:-0.358px;">Search comp. mngr</span>
<svg class="b" style="left:25.5px;top:966.6px;" width="11" height="13" viewBox="0 0 11 13"><path d="M1 2.2 Q1 0.8 2.4 0.8 H6.2 L10 4.6 V10.8 Q10 12.2 8.6 12.2 H2.4 Q1 12.2 1 10.8 Z M6 0.8 V4.8 H10" fill="none" stroke="#e2e2e2" stroke-width="1.1" stroke-linejoin="round"/></svg>
<div class="b" style="left:362px;top:184px;width:1196px;height:601px;background:#171a26;border-radius:4px;box-shadow:0 11px 15px -7px rgba(0,0,0,.2),0 24px 38px 3px rgba(0,0,0,.14),0 9px 46px 8px rgba(0,0,0,.12)"></div>
<div class="b" style="left:362px;top:231.7px;width:1196px;height:1.6px;background:#eceef1;"></div>
<span class="t" style="left:379.60px;top:198.50px;font-size:15px;font-weight:700;color:#fff;letter-spacing:-0.104px;">Competitions</span>
<svg class="b" style="left:1525.7px;top:201.7px;" width="12" height="12" viewBox="0 0 12 12"><path d="M0.6 0.6 L11.4 11.4 M11.4 0.6 L0.6 11.4" stroke="#a9bfe6" stroke-width="1.2" fill="none"/></svg>
<span class="t" style="left:388.00px;top:262.50px;font-size:13px;font-weight:700;color:#fff;letter-spacing:-0.842px;">Show all</span>
<div class="b" style="left:446px;top:265px;width:28px;height:14px;background:#8796b1;border-radius:7px"></div>
<div class="b" style="left:438px;top:261px;width:20px;height:20px;background:#8fcbfa;border-radius:10px"></div>
<div class="b" style="left:440px;top:263px;width:16px;height:16px;background:#2196f3;border-radius:8px"></div>
<div class="b" style="left:1475px;top:257px;width:28px;height:30px;background:#607d8b;border-radius:4px"></div>
<svg class="b" style="left:1483.4px;top:265.4px;" width="12" height="14" viewBox="0 0 12 14"><path d="M2.6 0.8 H6.4 L10 4.4 V11.6 Q10 12.8 8.8 12.8 H2.6 Q1.4 12.8 1.4 11.6 V2 Q1.4 0.8 2.6 0.8 Z M6.2 0.8 V4.6 H10" fill="none" stroke="#fff" stroke-width="1.25" stroke-linejoin="round"/><path d="M3.8 7.2 L7.6 11.2 M7.6 7.2 L3.8 11.2" stroke="#fff" stroke-width="1.4"/></svg>
<div class="b" style="left:1506px;top:257px;width:28px;height:30px;background:#607d8b;border-radius:4px"></div>
<svg class="b" style="left:1514.4px;top:265.6px;" width="14" height="12" viewBox="0 0 14 12"><rect x="0.9" y="1.2" width="11.4" height="9.2" rx="0.9" fill="none" stroke="#fff" stroke-width="1.7"/><path d="M6.6 1.2 V10.4" stroke="#fff" stroke-width="1.7"/></svg>
<div class="b" style="left:374px;top:299px;width:1172px;height:3px;background:#3b404d;"></div>
<div class="b" style="left:374px;top:302px;width:1172px;height:72px;background:#262a37;"></div>
<div class="b" style="left:374px;top:374px;width:1172px;height:1px;background:#3a3e4b;"></div>
<div class="b" style="left:374px;top:375px;width:1172px;height:34px;background:#32363f;"></div>
<div class="b" style="left:374px;top:410px;width:1172px;height:34px;background:#32363f;"></div>
<div class="b" style="left:374px;top:409px;width:1172px;height:1px;background:#2e323e;"></div>
<div class="b" style="left:374px;top:444px;width:1172px;height:1px;background:#2e323e;"></div>
<div class="b" style="left:374px;top:479px;width:1172px;height:1px;background:#2e323e;"></div>
<div class="b" style="left:374px;top:514px;width:1172px;height:1px;background:#2e323e;"></div>
<div class="b" style="left:374px;top:549px;width:1172px;height:1px;background:#2e323e;"></div>
<div class="b" style="left:374px;top:584px;width:1172px;height:1px;background:#2e323e;"></div>
<div class="b" style="left:374px;top:619px;width:1172px;height:1px;background:#2e323e;"></div>
<div class="b" style="left:374px;top:654px;width:1172px;height:1px;background:#2e323e;"></div>
<div class="b" style="left:374px;top:689px;width:1172px;height:1px;background:#2e323e;"></div>
<div class="b" style="left:374px;top:724px;width:1172px;height:3px;background:#434856;"></div>
<span class="t" style="left:383.50px;top:311.50px;font-size:13px;font-weight:700;color:#fff;letter-spacing:-0.605px;">Name</span>
<svg class="b" style="left:422.2px;top:314px;" width="14" height="14" viewBox="0 0 14 14"><path d="M3.8 13 V1.6 M10 0.6 V12 " fill="none" stroke="#fff" stroke-width="1.9"/><path d="M0.5 4.8 L3.8 0.6 L7.1 4.8 Z M6.7 8.8 L10 13 L13.3 8.8 Z" fill="#fff" stroke="none"/></svg>
<span class="t" style="left:657.50px;top:311.50px;font-size:13px;font-weight:700;color:#2f9df4;letter-spacing:-1.208px;">Season</span>
<svg class="b" style="left:702.0px;top:314px;" width="14" height="14" viewBox="0 0 14 14"><path d="M3.4 1.4 V11.6" fill="none" stroke="#2f9df4" stroke-width="1.7"/><path d="M0.6 8.6 L3.4 12.6 L6.2 8.6 Z" fill="#2f9df4"/><path d="M6.4 3 H13.2 M6.4 5.4 H12 M6.4 7.8 H10.2 M6.4 10.2 H8.6" stroke="#2f9df4" stroke-width="1.2"/></svg>
<span class="t" style="left:733.00px;top:311.50px;font-size:13px;font-weight:700;color:#fff;letter-spacing:-0.599px;">Organisation</span>
<svg class="b" style="left:810.2px;top:314px;" width="14" height="14" viewBox="0 0 14 14"><path d="M3.8 13 V1.6 M10 0.6 V12 " fill="none" stroke="#fff" stroke-width="1.9"/><path d="M0.5 4.8 L3.8 0.6 L7.1 4.8 Z M6.7 8.8 L10 13 L13.3 8.8 Z" fill="#fff" stroke="none"/></svg>
<span class="t" style="left:910.00px;top:311.50px;font-size:13px;font-weight:700;color:#fff;letter-spacing:-0.483px;">Team type</span>
<span class="t" style="left:986.00px;top:311.50px;font-size:13px;font-weight:700;color:#fff;letter-spacing:-0.642px;">Discipline</span>
<span class="t" style="left:1100.00px;top:311.50px;font-size:13px;font-weight:700;color:#fff;letter-spacing:-0.669px;">Gender</span>
<span class="t" style="left:1203.00px;top:311.50px;font-size:13px;font-weight:700;color:#fff;letter-spacing:-0.531px;">Age category</span>
<span class="t" style="left:1422.00px;top:311.50px;font-size:13px;font-weight:700;color:#fff;letter-spacing:-1.025px;">Clubs</span>
<svg class="b" style="left:1458.2px;top:314px;" width="14" height="14" viewBox="0 0 14 14"><path d="M3.8 13 V1.6 M10 0.6 V12 " fill="none" stroke="#fff" stroke-width="1.9"/><path d="M0.5 4.8 L3.8 0.6 L7.1 4.8 Z M6.7 8.8 L10 13 L13.3 8.8 Z" fill="#fff" stroke="none"/></svg>
<span class="t" style="left:1490.00px;top:311.50px;font-size:13px;font-weight:700;color:#fff;letter-spacing:-0.706px;">Status</span>
<div class="b" style="left:383px;top:335px;width:256px;height:30px;background:#212637;border:1px solid #333848;border-radius:4px"></div>
<div class="b" style="left:657px;top:335px;width:58px;height:30px;background:#212637;border:1px solid #333848;border-radius:4px"></div>
<div class="b" style="left:733px;top:335px;width:159px;height:30px;background:#212637;border:1px solid #333848;border-radius:4px"></div>
<div class="b" style="left:1422px;top:335px;width:50px;height:30px;background:#212637;border:1px solid #333848;border-radius:4px"></div>
<div class="b" style="left:986px;top:335px;width:96px;height:29px;background:#212637;border:1px solid #333848;border-radius:4px"></div>
<svg class="b" style="left:1059px;top:345px;" width="14" height="9" viewBox="0 0 14 9"><path d="M1.5 1.5 L7 7 L12.5 1.5" fill="none" stroke="#c3c7d1" stroke-width="1.4"/></svg>
<div class="b" style="left:1100px;top:335px;width:85px;height:29px;background:#212637;border:1px solid #333848;border-radius:4px"></div>
<svg class="b" style="left:1162px;top:345px;" width="14" height="9" viewBox="0 0 14 9"><path d="M1.5 1.5 L7 7 L12.5 1.5" fill="none" stroke="#c3c7d1" stroke-width="1.4"/></svg>
<div class="b" style="left:1203px;top:335px;width:201px;height:29px;background:#212637;border:1px solid #333848;border-radius:4px"></div>
<svg class="b" style="left:1381px;top:345px;" width="14" height="9" viewBox="0 0 14 9"><path d="M1.5 1.5 L7 7 L12.5 1.5" fill="none" stroke="#c3c7d1" stroke-width="1.4"/></svg>
<span class="t" style="-webkit-text-stroke:0.22px;left:383.50px;top:382.50px;font-size:13px;font-weight:400;color:#f2f3f5;letter-spacing:-0.418px;">1. liga početnika U-11 2019/20 - Split 22/23</span>
<span class="t" style="-webkit-text-stroke:0.22px;left:657.50px;top:382.50px;font-size:13px;font-weight:400;color:#f2f3f5;letter-spacing:-0.606px;">2022/2023</span>
<span class="t" style="-webkit-text-stroke:0.22px;left:733.00px;top:382.50px;font-size:13px;font-weight:400;color:#f2f3f5;letter-spacing:-0.472px;">ŽNS splitsko-dalmatinski</span>
<span class="t" style="-webkit-text-stroke:0.22px;left:910.00px;top:382.50px;font-size:13px;font-weight:400;color:#f2f3f5;letter-spacing:-0.583px;">Club team</span>
<span class="t" style="-webkit-text-stroke:0.22px;left:986.00px;top:382.50px;font-size:13px;font-weight:400;color:#f2f3f5;letter-spacing:-0.406px;">Football</span>
<span class="t" style="-webkit-text-stroke:0.22px;left:1100.00px;top:382.50px;font-size:13px;font-weight:400;color:#f2f3f5;letter-spacing:-0.547px;">Male</span>
<span class="t" style="-webkit-text-stroke:0.22px;left:1203.00px;top:382.50px;font-size:13px;font-weight:400;color:#f2f3f5;letter-spacing:-0.672px;">Beginners</span>
<span class="t" style="-webkit-text-stroke:0.22px;left:1422.80px;top:382.50px;font-size:13px;font-weight:400;color:#f2f3f5;letter-spacing:-1.134px;">13</span>
<div class="b" style="left:1490px;top:384.0px;width:47px;height:18px;background:#c8e6c9;border-radius:2.5px;"></div>
<span class="t" style="left:1496.20px;top:384.10px;font-size:10px;font-weight:700;color:#23672c;letter-spacing:-0.345px;">ACTIVE</span>
<span class="t" style="-webkit-text-stroke:0.22px;left:383.50px;top:417.50px;font-size:13px;font-weight:400;color:#f2f3f5;letter-spacing:-0.836px;">1.NL &quot;SREDIŠTA SPLIT Kadeti-Juniori 21/22</span>
<span class="t" style="-webkit-text-stroke:0.22px;left:657.50px;top:417.50px;font-size:13px;font-weight:400;color:#f2f3f5;letter-spacing:-0.606px;">2021/2022</span>
<span class="t" style="-webkit-text-stroke:0.22px;left:733.00px;top:417.50px;font-size:13px;font-weight:400;color:#f2f3f5;letter-spacing:-1.151px;">HNS</span>
<span class="t" style="-webkit-text-stroke:0.22px;left:910.00px;top:417.50px;font-size:13px;font-weight:400;color:#f2f3f5;letter-spacing:-0.583px;">Club team</span>
<span class="t" style="-webkit-text-stroke:0.22px;left:986.00px;top:417.50px;font-size:13px;font-weight:400;color:#f2f3f5;letter-spacing:-0.406px;">Football</span>
<span class="t" style="-webkit-text-stroke:0.22px;left:1100.00px;top:417.50px;font-size:13px;font-weight:400;color:#f2f3f5;letter-spacing:-0.547px;">Male</span>
<span class="t" style="-webkit-text-stroke:0.22px;left:1203.00px;top:417.50px;font-size:13px;font-weight:400;color:#f2f3f5;letter-spacing:-0.701px;">Cadets</span>
<span class="t" style="-webkit-text-stroke:0.22px;left:1422.80px;top:417.50px;font-size:13px;font-weight:400;color:#f2f3f5;letter-spacing:-1.134px;">16</span>
<div class="b" style="left:1490px;top:419.0px;width:47px;height:18px;background:#c8e6c9;border-radius:2.5px;"></div>
<span class="t" style="left:1496.20px;top:419.10px;font-size:10px;font-weight:700;color:#23672c;letter-spacing:-0.345px;">ACTIVE</span>
<span class="t" style="-webkit-text-stroke:0.22px;left:383.50px;top:452.50px;font-size:13px;font-weight:400;color:#f2f3f5;letter-spacing:-0.679px;opacity:.85;">1.NL &quot;SREDIŠTA SPLIT Mlađi pioniri-Pioniri 21/22</span>
<span class="t" style="-webkit-text-stroke:0.22px;left:657.50px;top:452.50px;font-size:13px;font-weight:400;color:#f2f3f5;letter-spacing:-0.606px;opacity:.85;">2021/2022</span>
<span class="t" style="-webkit-text-stroke:0.22px;left:733.00px;top:452.50px;font-size:13px;font-weight:400;color:#f2f3f5;letter-spacing:-1.151px;opacity:.85;">HNS</span>
<span class="t" style="-webkit-text-stroke:0.22px;left:910.00px;top:452.50px;font-size:13px;font-weight:400;color:#f2f3f5;letter-spacing:-0.583px;opacity:.85;">Club team</span>
<span class="t" style="-webkit-text-stroke:0.22px;left:986.00px;top:452.50px;font-size:13px;font-weight:400;color:#f2f3f5;letter-spacing:-0.406px;opacity:.85;">Football</span>
<span class="t" style="-webkit-text-stroke:0.22px;left:1100.00px;top:452.50px;font-size:13px;font-weight:400;color:#f2f3f5;letter-spacing:-0.547px;opacity:.85;">Male</span>
<span class="t" style="-webkit-text-stroke:0.22px;left:1203.00px;top:452.50px;font-size:13px;font-weight:400;color:#f2f3f5;letter-spacing:-0.789px;opacity:.85;">Pioneers</span>
<span class="t" style="-webkit-text-stroke:0.22px;left:1422.80px;top:452.50px;font-size:13px;font-weight:400;color:#f2f3f5;letter-spacing:-1.134px;opacity:.85;">16</span>
<div class="b" style="left:1490px;top:454.0px;width:47px;height:18px;background:#c8e6c9;border-radius:2.5px;opacity:.85;"></div>
<span class="t" style="left:1496.20px;top:454.10px;font-size:10px;font-weight:700;color:#23672c;letter-spacing:-0.345px;opacity:.85;">ACTIVE</span>
<span class="t" style="-webkit-text-stroke:0.22px;left:383.50px;top:487.50px;font-size:13px;font-weight:400;color:#f2f3f5;letter-spacing:-0.824px;opacity:.85;">2.NL &quot;SREDIŠTA SPLIT Kadeti-Juniori 21/22</span>
<span class="t" style="-webkit-text-stroke:0.22px;left:657.50px;top:487.50px;font-size:13px;font-weight:400;color:#f2f3f5;letter-spacing:-0.606px;opacity:.85;">2021/2022</span>
<span class="t" style="-webkit-text-stroke:0.22px;left:733.00px;top:487.50px;font-size:13px;font-weight:400;color:#f2f3f5;letter-spacing:-1.151px;opacity:.85;">HNS</span>
<span class="t" style="-webkit-text-stroke:0.22px;left:910.00px;top:487.50px;font-size:13px;font-weight:400;color:#f2f3f5;letter-spacing:-0.583px;opacity:.85;">Club team</span>
<span class="t" style="-webkit-text-stroke:0.22px;left:986.00px;top:487.50px;font-size:13px;font-weight:400;color:#f2f3f5;letter-spacing:-0.406px;opacity:.85;">Football</span>
<span class="t" style="-webkit-text-stroke:0.22px;left:1100.00px;top:487.50px;font-size:13px;font-weight:400;color:#f2f3f5;letter-spacing:-0.547px;opacity:.85;">Male</span>
<span class="t" style="-webkit-text-stroke:0.22px;left:1203.00px;top:487.50px;font-size:13px;font-weight:400;color:#f2f3f5;letter-spacing:-0.701px;opacity:.85;">Cadets</span>
<span class="t" style="-webkit-text-stroke:0.22px;left:1422.80px;top:487.50px;font-size:13px;font-weight:400;color:#f2f3f5;letter-spacing:-1.134px;opacity:.85;">10</span>
<div class="b" style="left:1490px;top:489.0px;width:47px;height:18px;background:#c8e6c9;border-radius:2.5px;opacity:.85;"></div>
<span class="t" style="left:1496.20px;top:489.10px;font-size:10px;font-weight:700;color:#23672c;letter-spacing:-0.345px;opacity:.85;">ACTIVE</span>
<span class="t" style="-webkit-text-stroke:0.22px;left:383.50px;top:522.50px;font-size:13px;font-weight:400;color:#f2f3f5;letter-spacing:-0.490px;">Liga prednatjecatelja U-9 21/22</span>
<span class="t" style="-webkit-text-stroke:0.22px;left:657.50px;top:522.50px;font-size:13px;font-weight:400;color:#f2f3f5;letter-spacing:-0.606px;">2021/2022</span>
<span class="t" style="-webkit-text-stroke:0.22px;left:733.00px;top:522.50px;font-size:13px;font-weight:400;color:#f2f3f5;letter-spacing:-0.472px;">ŽNS splitsko-dalmatinski</span>
<span class="t" style="-webkit-text-stroke:0.22px;left:910.00px;top:522.50px;font-size:13px;font-weight:400;color:#f2f3f5;letter-spacing:-0.583px;">Club team</span>
<span class="t" style="-webkit-text-stroke:0.22px;left:986.00px;top:522.50px;font-size:13px;font-weight:400;color:#f2f3f5;letter-spacing:-0.406px;">Football</span>
<span class="t" style="-webkit-text-stroke:0.22px;left:1100.00px;top:522.50px;font-size:13px;font-weight:400;color:#f2f3f5;letter-spacing:-0.547px;">Male</span>
<span class="t" style="-webkit-text-stroke:0.22px;left:1203.00px;top:522.50px;font-size:13px;font-weight:400;color:#f2f3f5;letter-spacing:-0.527px;">Children 2</span>
<span class="t" style="-webkit-text-stroke:0.22px;left:1422.80px;top:522.50px;font-size:13px;font-weight:400;color:#f2f3f5;letter-spacing:-1.134px;">19</span>
<div class="b" style="left:1490px;top:524.0px;width:47px;height:18px;background:#c8e6c9;border-radius:2.5px;"></div>
<span class="t" style="left:1496.20px;top:524.10px;font-size:10px;font-weight:700;color:#23672c;letter-spacing:-0.345px;">ACTIVE</span>
<span class="t" style="-webkit-text-stroke:0.22px;left:383.50px;top:557.50px;font-size:13px;font-weight:400;color:#f2f3f5;letter-spacing:-0.491px;opacity:.85;">1. liga U-11 2021/2022 21/22</span>
<span class="t" style="-webkit-text-stroke:0.22px;left:657.50px;top:557.50px;font-size:13px;font-weight:400;color:#f2f3f5;letter-spacing:-0.606px;opacity:.85;">2021/2022</span>
<span class="t" style="-webkit-text-stroke:0.22px;left:733.00px;top:557.50px;font-size:13px;font-weight:400;color:#f2f3f5;letter-spacing:-0.472px;opacity:.85;">ŽNS splitsko-dalmatinski</span>
<span class="t" style="-webkit-text-stroke:0.22px;left:910.00px;top:557.50px;font-size:13px;font-weight:400;color:#f2f3f5;letter-spacing:-0.583px;opacity:.85;">Club team</span>
<span class="t" style="-webkit-text-stroke:0.22px;left:986.00px;top:557.50px;font-size:13px;font-weight:400;color:#f2f3f5;letter-spacing:-0.406px;opacity:.85;">Football</span>
<span class="t" style="-webkit-text-stroke:0.22px;left:1100.00px;top:557.50px;font-size:13px;font-weight:400;color:#f2f3f5;letter-spacing:-0.547px;opacity:.85;">Male</span>
<span class="t" style="-webkit-text-stroke:0.22px;left:1203.00px;top:557.50px;font-size:13px;font-weight:400;color:#f2f3f5;letter-spacing:-0.672px;opacity:.85;">Beginners</span>
<span class="t" style="-webkit-text-stroke:0.22px;left:1422.80px;top:557.50px;font-size:13px;font-weight:400;color:#f2f3f5;letter-spacing:-1.134px;opacity:.85;">12</span>
<div class="b" style="left:1490px;top:559.0px;width:47px;height:18px;background:#c8e6c9;border-radius:2.5px;opacity:.85;"></div>
<span class="t" style="left:1496.20px;top:559.10px;font-size:10px;font-weight:700;color:#23672c;letter-spacing:-0.345px;opacity:.85;">ACTIVE</span>
<span class="t" style="-webkit-text-stroke:0.22px;left:383.50px;top:592.50px;font-size:13px;font-weight:400;color:#f2f3f5;letter-spacing:-0.565px;opacity:.85;">Hrvatski Telekom Prva liga 20/21</span>
<span class="t" style="-webkit-text-stroke:0.22px;left:657.50px;top:592.50px;font-size:13px;font-weight:400;color:#f2f3f5;letter-spacing:-0.606px;opacity:.85;">2020/2021</span>
<span class="t" style="-webkit-text-stroke:0.22px;left:733.00px;top:592.50px;font-size:13px;font-weight:400;color:#f2f3f5;letter-spacing:-1.151px;opacity:.85;">HNS</span>
<span class="t" style="-webkit-text-stroke:0.22px;left:910.00px;top:592.50px;font-size:13px;font-weight:400;color:#f2f3f5;letter-spacing:-0.583px;opacity:.85;">Club team</span>
<span class="t" style="-webkit-text-stroke:0.22px;left:986.00px;top:592.50px;font-size:13px;font-weight:400;color:#f2f3f5;letter-spacing:-0.406px;opacity:.85;">Football</span>
<span class="t" style="-webkit-text-stroke:0.22px;left:1100.00px;top:592.50px;font-size:13px;font-weight:400;color:#f2f3f5;letter-spacing:-0.547px;opacity:.85;">Male</span>
<span class="t" style="-webkit-text-stroke:0.22px;left:1203.00px;top:592.50px;font-size:13px;font-weight:400;color:#f2f3f5;letter-spacing:-0.725px;opacity:.85;">Seniors</span>
<span class="t" style="-webkit-text-stroke:0.22px;left:1422.80px;top:592.50px;font-size:13px;font-weight:400;color:#f2f3f5;letter-spacing:-1.134px;opacity:.85;">10</span>
<div class="b" style="left:1490px;top:594.0px;width:47px;height:18px;background:#c8e6c9;border-radius:2.5px;opacity:.85;"></div>
<span class="t" style="left:1496.20px;top:594.10px;font-size:10px;font-weight:700;color:#23672c;letter-spacing:-0.345px;opacity:.85;">ACTIVE</span>
<span class="t" style="-webkit-text-stroke:0.22px;left:383.50px;top:627.50px;font-size:13px;font-weight:400;color:#f2f3f5;letter-spacing:-0.428px;opacity:.85;">Hrvatski nogometni kup 20/21</span>
<span class="t" style="-webkit-text-stroke:0.22px;left:657.50px;top:627.50px;font-size:13px;font-weight:400;color:#f2f3f5;letter-spacing:-0.606px;opacity:.85;">2020/2021</span>
<span class="t" style="-webkit-text-stroke:0.22px;left:733.00px;top:627.50px;font-size:13px;font-weight:400;color:#f2f3f5;letter-spacing:-1.151px;opacity:.85;">HNS</span>
<span class="t" style="-webkit-text-stroke:0.22px;left:910.00px;top:627.50px;font-size:13px;font-weight:400;color:#f2f3f5;letter-spacing:-0.583px;opacity:.85;">Club team</span>
<span class="t" style="-webkit-text-stroke:0.22px;left:986.00px;top:627.50px;font-size:13px;font-weight:400;color:#f2f3f5;letter-spacing:-0.406px;opacity:.85;">Football</span>
<span class="t" style="-webkit-text-stroke:0.22px;left:1100.00px;top:627.50px;font-size:13px;font-weight:400;color:#f2f3f5;letter-spacing:-0.547px;opacity:.85;">Male</span>
<span class="t" style="-webkit-text-stroke:0.22px;left:1203.00px;top:627.50px;font-size:13px;font-weight:400;color:#f2f3f5;letter-spacing:-0.725px;opacity:.85;">Seniors</span>
<span class="t" style="-webkit-text-stroke:0.22px;left:1422.80px;top:627.50px;font-size:13px;font-weight:400;color:#f2f3f5;letter-spacing:-1.134px;opacity:.85;">48</span>
<div class="b" style="left:1490px;top:629.0px;width:47px;height:18px;background:#c8e6c9;border-radius:2.5px;opacity:.85;"></div>
<span class="t" style="left:1496.20px;top:629.10px;font-size:10px;font-weight:700;color:#23672c;letter-spacing:-0.345px;opacity:.85;">ACTIVE</span>
<span class="t" style="-webkit-text-stroke:0.22px;left:383.50px;top:662.50px;font-size:13px;font-weight:400;color:#f2f3f5;letter-spacing:-0.753px;">Prva HNL - JUNIORI 20/21</span>
<span class="t" style="-webkit-text-stroke:0.22px;left:657.50px;top:662.50px;font-size:13px;font-weight:400;color:#f2f3f5;letter-spacing:-0.606px;">2020/2021</span>
<span class="t" style="-webkit-text-stroke:0.22px;left:733.00px;top:662.50px;font-size:13px;font-weight:400;color:#f2f3f5;letter-spacing:-1.151px;">HNS</span>
<span class="t" style="-webkit-text-stroke:0.22px;left:910.00px;top:662.50px;font-size:13px;font-weight:400;color:#f2f3f5;letter-spacing:-0.583px;">Club team</span>
<span class="t" style="-webkit-text-stroke:0.22px;left:986.00px;top:662.50px;font-size:13px;font-weight:400;color:#f2f3f5;letter-spacing:-0.406px;">Football</span>
<span class="t" style="-webkit-text-stroke:0.22px;left:1100.00px;top:662.50px;font-size:13px;font-weight:400;color:#f2f3f5;letter-spacing:-0.547px;">Male</span>
<span class="t" style="-webkit-text-stroke:0.22px;left:1203.00px;top:662.50px;font-size:13px;font-weight:400;color:#f2f3f5;letter-spacing:-0.560px;">Juniors</span>
<span class="t" style="-webkit-text-stroke:0.22px;left:1422.80px;top:662.50px;font-size:13px;font-weight:400;color:#f2f3f5;letter-spacing:-1.134px;">14</span>
<div class="b" style="left:1490px;top:664.0px;width:47px;height:18px;background:#c8e6c9;border-radius:2.5px;"></div>
<span class="t" style="left:1496.20px;top:664.10px;font-size:10px;font-weight:700;color:#23672c;letter-spacing:-0.345px;">ACTIVE</span>
<span class="t" style="-webkit-text-stroke:0.22px;left:383.50px;top:697.50px;font-size:13px;font-weight:400;color:#f2f3f5;letter-spacing:-0.549px;">I. liga HNS Središte Osijek - Juniori 2020./&#x27;21.</span>
<span class="t" style="-webkit-text-stroke:0.22px;left:657.50px;top:697.50px;font-size:13px;font-weight:400;color:#f2f3f5;letter-spacing:-0.606px;">2020/2021</span>
<span class="t" style="-webkit-text-stroke:0.22px;left:733.00px;top:697.50px;font-size:13px;font-weight:400;color:#f2f3f5;letter-spacing:-1.151px;">HNS</span>
<span class="t" style="-webkit-text-stroke:0.22px;left:910.00px;top:697.50px;font-size:13px;font-weight:400;color:#f2f3f5;letter-spacing:-0.583px;">Club team</span>
<span class="t" style="-webkit-text-stroke:0.22px;left:986.00px;top:697.50px;font-size:13px;font-weight:400;color:#f2f3f5;letter-spacing:-0.406px;">Football</span>
<span class="t" style="-webkit-text-stroke:0.22px;left:1100.00px;top:697.50px;font-size:13px;font-weight:400;color:#f2f3f5;letter-spacing:-0.547px;">Male</span>
<span class="t" style="-webkit-text-stroke:0.22px;left:1203.00px;top:697.50px;font-size:13px;font-weight:400;color:#f2f3f5;letter-spacing:-0.560px;">Juniors</span>
<span class="t" style="-webkit-text-stroke:0.22px;left:1422.80px;top:697.50px;font-size:13px;font-weight:400;color:#f2f3f5;letter-spacing:-1.134px;">12</span>
<div class="b" style="left:1490px;top:699.0px;width:47px;height:18px;background:#c8e6c9;border-radius:2.5px;"></div>
<span class="t" style="left:1496.20px;top:699.10px;font-size:10px;font-weight:700;color:#23672c;letter-spacing:-0.345px;">ACTIVE</span>
<span class="t" style="-webkit-text-stroke:0.22px;left:904.00px;top:744.00px;font-size:12px;font-weight:400;color:#a4abba;letter-spacing:-0.626px;">Items per page:</span>
<div class="b" style="left:984px;top:739px;width:46px;height:29px;background:#1f2332;border:1px solid #3b4050;border-radius:4px"></div>
<span class="t" style="-webkit-text-stroke:0.22px;left:991.00px;top:744.00px;font-size:13px;font-weight:400;color:#fff;letter-spacing:-0.734px;">10</span>
<svg class="b" style="left:1008px;top:749px;" width="14" height="9" viewBox="0 0 14 9"><path d="M1.5 1.5 L7 7 L12.5 1.5" fill="none" stroke="#c9cdd6" stroke-width="1.4"/></svg>
<span class="t" style="-webkit-text-stroke:0.22px;left:1048.00px;top:744.00px;font-size:12px;font-weight:400;color:#a4abba;letter-spacing:-0.551px;">1 - 10 of 954 results</span>
<svg class="b" style="left:1163px;top:748px;" width="10" height="8" viewBox="0 0 10 8"><path d="M4.5 0.8 L1.3 4 L4.5 7.2 M8.7 0.8 L5.5 4 L8.7 7.2" fill="none" stroke="#8f97a9" stroke-width="1.1"/></svg>
<svg class="b" style="left:1193px;top:748px;" width="6" height="10" viewBox="0 0 6 10"><path d="M4.8 1 L1.2 5 L4.8 9" fill="none" stroke="#8f97a9" stroke-width="1.2"/></svg>
<div class="b" style="left:1212px;top:741px;width:24px;height:24px;background:#2196f3;border-radius:3px"></div>
<span class="t" style="left:1221.00px;top:744.00px;font-size:12.5px;font-weight:700;color:#fff;letter-spacing:-0.953px;">1</span>
<span class="t" style="-webkit-text-stroke:0.22px;left:1247.75px;top:744.00px;font-size:12.5px;font-weight:400;color:#a4abba;letter-spacing:-0.453px;">2</span>
<span class="t" style="-webkit-text-stroke:0.22px;left:1275.25px;top:744.00px;font-size:12.5px;font-weight:400;color:#a4abba;letter-spacing:-0.453px;">3</span>
<span class="t" style="-webkit-text-stroke:0.22px;left:1302.75px;top:744.00px;font-size:12.5px;font-weight:400;color:#a4abba;letter-spacing:-0.453px;">4</span>
<span class="t" style="-webkit-text-stroke:0.22px;left:1329.75px;top:744.00px;font-size:12.5px;font-weight:400;color:#a4abba;letter-spacing:-0.453px;">5</span>
<span class="t" style="-webkit-text-stroke:0.22px;left:1357.25px;top:744.00px;font-size:12.5px;font-weight:400;color:#a4abba;letter-spacing:-0.453px;">6</span>
<span class="t" style="-webkit-text-stroke:0.22px;left:1384.75px;top:744.00px;font-size:12.5px;font-weight:400;color:#a4abba;letter-spacing:-0.453px;">7</span>
<span class="t" style="-webkit-text-stroke:0.22px;left:1411.75px;top:744.00px;font-size:12.5px;font-weight:400;color:#a4abba;letter-spacing:-0.453px;">8</span>
<span class="t" style="-webkit-text-stroke:0.22px;left:1439.25px;top:744.00px;font-size:12.5px;font-weight:400;color:#a4abba;letter-spacing:-0.453px;">9</span>
<span class="t" style="-webkit-text-stroke:0.22px;left:1463.50px;top:744.00px;font-size:12.5px;font-weight:400;color:#a4abba;letter-spacing:-0.453px;">10</span>
<svg class="b" style="left:1495px;top:748px;" width="6" height="10" viewBox="0 0 6 10"><path d="M1.2 1 L4.8 5 L1.2 9" fill="none" stroke="#8f97a9" stroke-width="1.2"/></svg>
<svg class="b" style="left:1521px;top:748px;" width="10" height="8" viewBox="0 0 10 8"><path d="M1.3 0.8 L4.5 4 L1.3 7.2 M5.5 0.8 L8.7 4 L5.5 7.2" fill="none" stroke="#8f97a9" stroke-width="1.1"/></svg>
<svg class="b" style="left:574px;top:416px;" width="18" height="24" viewBox="0 0 18 24"><path d="M1.5 1.5 V17.5 L5.4 14 L8.4 20.8 L11 19.7 L8 13 H13.2 Z" fill="#111" stroke="#fff" stroke-width="1.2" stroke-linejoin="round"/></svg>
<div class="b" style="left:294px;top:674px;width:63px;height:5px;background:#2b2f3b;"></div>
<div class="b" style="left:294px;top:679px;width:63px;height:30px;background:#3ca0f4;border-radius:4px 4px 0 0"></div>
<svg class="b" style="left:304px;top:688px;" width="12" height="12" viewBox="0 0 12 12"><path d="M6 0.5 V11.5 M0.5 6 H11.5" stroke="#fff" stroke-width="1.5"/></svg>
<span class="t" style="left:325.60px;top:684.50px;font-size:12.5px;font-weight:700;color:#fff;letter-spacing:-0.938px;">Add</span>
<div class="b" style="left:285px;top:665px;width:81px;height:47px;background:transparent;border:9px solid #fb4141;box-shadow:0 3px 7px rgba(0,0,0,0.55), inset 0 2px 3px rgba(0,0,0,0.3)"></div>
<div class="b" style="left:1599px;top:85px;width:300px;height:70px;background:#a2cbe1;border-radius:4px;border-left:6px solid #1a9ae0"></div>
<svg class="b" style="left:1616px;top:96.2px;" width="26" height="26" viewBox="0 0 26 26"><circle cx="13" cy="13" r="11.1" fill="none" stroke="#0f5c9e" stroke-width="1.5"/><path d="M13 11 V19.2" stroke="#0f5c9e" stroke-width="1.9"/><circle cx="13" cy="8" r="1.15" fill="#0f5c9e"/></svg>
<span class="t" style="left:1668.30px;top:95.60px;font-size:12.5px;font-weight:700;color:#115c9c;letter-spacing:-0.539px;">The transaction is successfully</span>
<span class="t" style="left:1668.30px;top:111.50px;font-size:12.5px;font-weight:700;color:#115c9c;letter-spacing:-0.464px;">executed.</span>
<div class="b" style="left:1605px;top:80px;width:297px;height:75px;background:transparent;border:9px solid #fb4141;box-shadow:0 3px 8px rgba(0,0,0,0.6), inset 0 2px 4px rgba(0,0,0,0.35)"></div>
</body></html>
